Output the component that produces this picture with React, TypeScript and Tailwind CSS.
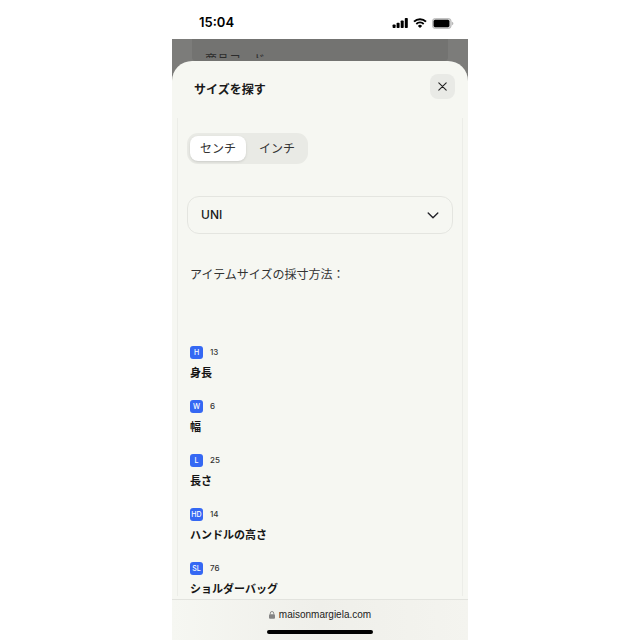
import { useState } from 'react'

const UNITS = [
  { label: 'センチ', value: 'cm' },
  { label: 'インチ', value: 'in' },
]

const MEASUREMENTS = [
  { code: 'H', value: 13, label: '身長' },
  { code: 'W', value: 6, label: '幅' },
  { code: 'L', value: 25, label: '長さ' },
  { code: 'HD', value: 14, label: 'ハンドルの高さ' },
  { code: 'SL', value: 76, label: 'ショルダーバッグ' },
]

function StatusBar() {
  return (
    <header className="flex h-[39px] items-center justify-between pt-[7px] pr-[14px] pl-[27px] text-black">
      <time className="text-[13px] font-semibold">15:04</time>
      <div className="flex items-center gap-[5px]">
        <svg className="h-[10px] w-4" viewBox="0 0 16 10" aria-label="signal">
          <rect x="0.6" y="6.5" width="3" height="3.5" rx="0.8" />
          <rect x="4.6" y="4.7" width="3" height="5.3" rx="0.8" />
          <rect x="8.7" y="2.5" width="3" height="7.5" rx="0.8" />
          <rect x="12.8" y="0" width="3" height="10" rx="0.8" />
        </svg>
        <svg className="h-[10px] w-[14px]" viewBox="0 0 14 10" fill="none" stroke="currentColor" aria-label="wifi">
          <path d="M1 3.6a8.6 8.6 0 0 1 12 0" strokeWidth="2" />
          <path d="M3.3 6a5.3 5.3 0 0 1 7.4 0" strokeWidth="1.8" />
          <path d="M7 10 4.9 7.9a3 3 0 0 1 4.2 0z" fill="currentColor" stroke="none" />
        </svg>
        <svg className="h-[11px] w-[22px]" viewBox="0 0 22 11" aria-label="battery">
          <rect x="0.4" y="0.4" width="18.8" height="10.2" rx="3" fill="#d0d0d0" stroke="#b4b4b4" strokeWidth="0.8" />
          <rect x="1.6" y="1.8" width="15.8" height="7.4" rx="1.6" />
          <path d="M20.2 3.7c1.5.7 1.5 2.9 0 3.6z" fill="#a9a9a9" />
        </svg>
      </div>
    </header>
  )
}

function UnitToggle() {
  const [unit, setUnit] = useState('cm')

  return (
    <div className="flex w-fit rounded-[11px] bg-[#e9eae5] p-[3px]">
      {UNITS.map((item) => (
        <button
          key={item.value}
          type="button"
          aria-pressed={unit === item.value}
          onClick={() => setUnit(item.value)}
          className="h-[25px] cursor-pointer rounded-lg px-[10px] text-xs text-[#333] last:pl-[13px] aria-pressed:bg-white aria-pressed:shadow-sm"
        >
          {item.label}
        </button>
      ))}
    </div>
  )
}

function SizeSelect() {
  return (
    <div className="relative">
      <select
        aria-label="サイズ"
        className="h-[38px] w-full appearance-none rounded-xl border border-[#e4e5e0] bg-transparent px-[13px] text-xs font-medium text-[#1a1a1a]"
      >
        <option>UNI</option>
      </select>
      <svg
        className="pointer-events-none absolute top-4 right-[14px] h-[7px] w-3"
        viewBox="0 0 12 7"
        fill="none"
        stroke="#26262c"
        strokeWidth="1.4"
        strokeLinecap="round"
        strokeLinejoin="round"
      >
        <path d="m1.2 1 4.8 4.8L10.8 1" />
      </svg>
    </div>
  )
}

function App() {
  return (
    <div className="min-h-screen bg-white font-['Inter','Noto_Sans_CJK_JP',sans-serif]">
      <div className="mx-auto flex min-h-screen w-full max-w-[296px] flex-col">
        <StatusBar />

        <div className="flex grow flex-col bg-[#7c7c7a]">
          <div className="mx-5 h-[22px] rounded-b bg-[#737371] px-[13px] pt-[13px]">
            <p className="h-[6px] overflow-hidden text-xs leading-4 text-[#2c2c2c]">商品コード</p>
          </div>

          <main className="flex grow flex-col overflow-hidden rounded-t-[20px] bg-[#f6f7f2]">
            <div className="flex h-[57px] items-start justify-between pt-[13px] pr-[13px] pl-[22px]">
              <h1 className="pt-1.5 text-xs leading-5 font-bold text-[#1a1a1a]">サイズを探す</h1>
              <button
                type="button"
                aria-label="閉じる"
                className="flex size-[25px] cursor-pointer items-center justify-center rounded-lg bg-[#e9eae6]"
              >
                <svg className="size-[9px]" viewBox="0 0 9 9" stroke="#222" strokeWidth="1.1" strokeLinecap="round">
                  <path d="m.8.8 7.4 7.4M8.2.8.8 8.2" />
                </svg>
              </button>
            </div>

            <section className="mx-[5px] mb-[3px] grow border-x border-[#ecede8] px-[9px] pt-[15px]">
              <UnitToggle />
              <div className="mt-8">
                <SizeSelect />
              </div>

              <h2 className="mt-[31px] px-[3px] text-xs leading-5 text-[#333]">アイテムサイズの採寸方法：</h2>

              <dl className="mt-[61px] flex flex-col gap-5 px-[3px]">
                {MEASUREMENTS.map((item) => (
                  <div key={item.code} className="flex h-[34px] flex-col-reverse justify-between">
                    <dt className="text-[11px] leading-[14px] font-bold text-[#151515]">{item.label}</dt>
                    <dd className="flex items-center gap-[7px] text-[8px] leading-[13px] font-medium text-[#333]">
                      <span className="flex size-[13px] items-center justify-center rounded-[3px] bg-[#3568f3] text-[7px] text-white">
                        {item.code}
                      </span>
                      {item.value}
                    </dd>
                  </div>
                ))}
              </dl>
            </section>
          </main>
        </div>

        <footer className="flex h-[41px] flex-col items-center justify-between border-t border-[#e2e3de] bg-linear-to-r from-[#f6f7f2] via-[#efefea] to-[#f4f4ef] pt-2 pb-[6px]">
          <a
            href="https://maisonmargiela.com"
            className="flex items-center gap-1 font-['Liberation_Sans',sans-serif] text-[10px] leading-[14px] text-[#222]"
          >
            <svg className="h-2 w-[6px]" viewBox="0 0 6 8" fill="#858585">
              <rect x="0" y="3.2" width="6" height="4.6" rx="1" />
              <path d="M1.3 3.5V2.2a1.7 1.7 0 0 1 3.4 0v1.3" fill="none" stroke="#858585" strokeWidth="0.9" />
            </svg>
            maisonmargiela.com
          </a>
          <div className="h-1 w-[106px] rounded-full bg-black" />
        </footer>
      </div>
    </div>
  )
}

export default App
